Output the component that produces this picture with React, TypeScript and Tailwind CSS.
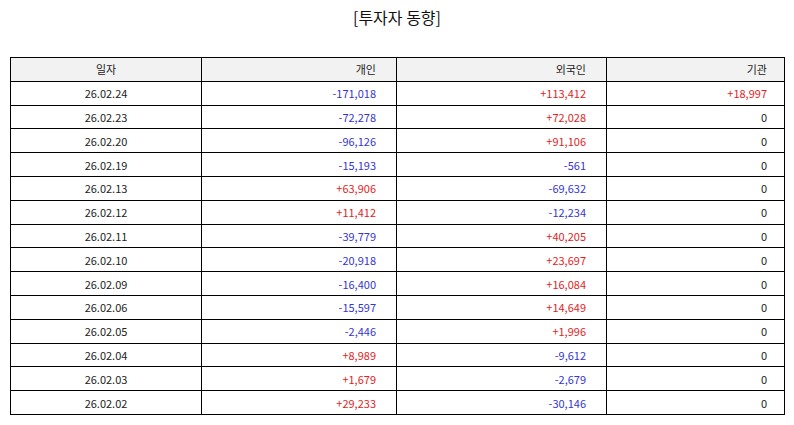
const rows: [string, string, string, string][] = [
  ["26.02.24", "-171,018", "+113,412", "+18,997"],
  ["26.02.23", "-72,278", "+72,028", "0"],
  ["26.02.20", "-96,126", "+91,106", "0"],
  ["26.02.19", "-15,193", "-561", "0"],
  ["26.02.13", "+63,906", "-69,632", "0"],
  ["26.02.12", "+11,412", "-12,234", "0"],
  ["26.02.11", "-39,779", "+40,205", "0"],
  ["26.02.10", "-20,918", "+23,697", "0"],
  ["26.02.09", "-16,400", "+16,084", "0"],
  ["26.02.06", "-15,597", "+14,649", "0"],
  ["26.02.05", "-2,446", "+1,996", "0"],
  ["26.02.04", "+8,989", "-9,612", "0"],
  ["26.02.03", "+1,679", "-2,679", "0"],
  ["26.02.02", "+29,233", "-30,146", "0"],
];

const tone = (v: string) =>
  v.startsWith("+") ? "text-[#e02424]" : v.startsWith("-") ? "text-[#3535d0]" : "text-[#222]";

const App = () => {
  return (
    <div className="w-[794px] h-[425px] bg-white font-['Noto_Sans_CJK_KR','Noto_Sans',sans-serif] text-[#222]">
      <h1 className="pt-[5px] h-[57px] text-center text-[16px] leading-[24px] text-[#111]">[투자자 동향]</h1>
      <table className="ml-[10px] w-[774px] border-collapse text-[11px] leading-[14px] table-fixed">
        <colgroup>
          <col className="w-[191px]" />
          <col className="w-[195px]" />
          <col className="w-[210px]" />
          <col className="w-[178px]" />
        </colgroup>
        <thead>
          <tr className="h-[23.8px] bg-[#f2f2f2]">
            <th className="border border-black p-0 font-normal text-center">일자</th>
            <th className="border border-black p-0 font-normal text-right pr-[20px]">개인</th>
            <th className="border border-black p-0 font-normal text-right pr-[20px]">외국인</th>
            <th className="border border-black p-0 font-normal text-right pr-[17px]">기관</th>
          </tr>
        </thead>
        <tbody>
          {rows.map(([d, a, b, c]) => (
            <tr key={d} className="h-[23.8px]">
              <td className="border border-black p-0 text-center">{d}</td>
              <td className={`border border-black p-0 text-right pr-[20px] ${tone(a)}`}>{a}</td>
              <td className={`border border-black p-0 text-right pr-[20px] ${tone(b)}`}>{b}</td>
              <td className={`border border-black p-0 text-right pr-[17px] ${tone(c)}`}>{c}</td>
            </tr>
          ))}
        </tbody>
      </table>
    </div>
  );
};

export default App;
